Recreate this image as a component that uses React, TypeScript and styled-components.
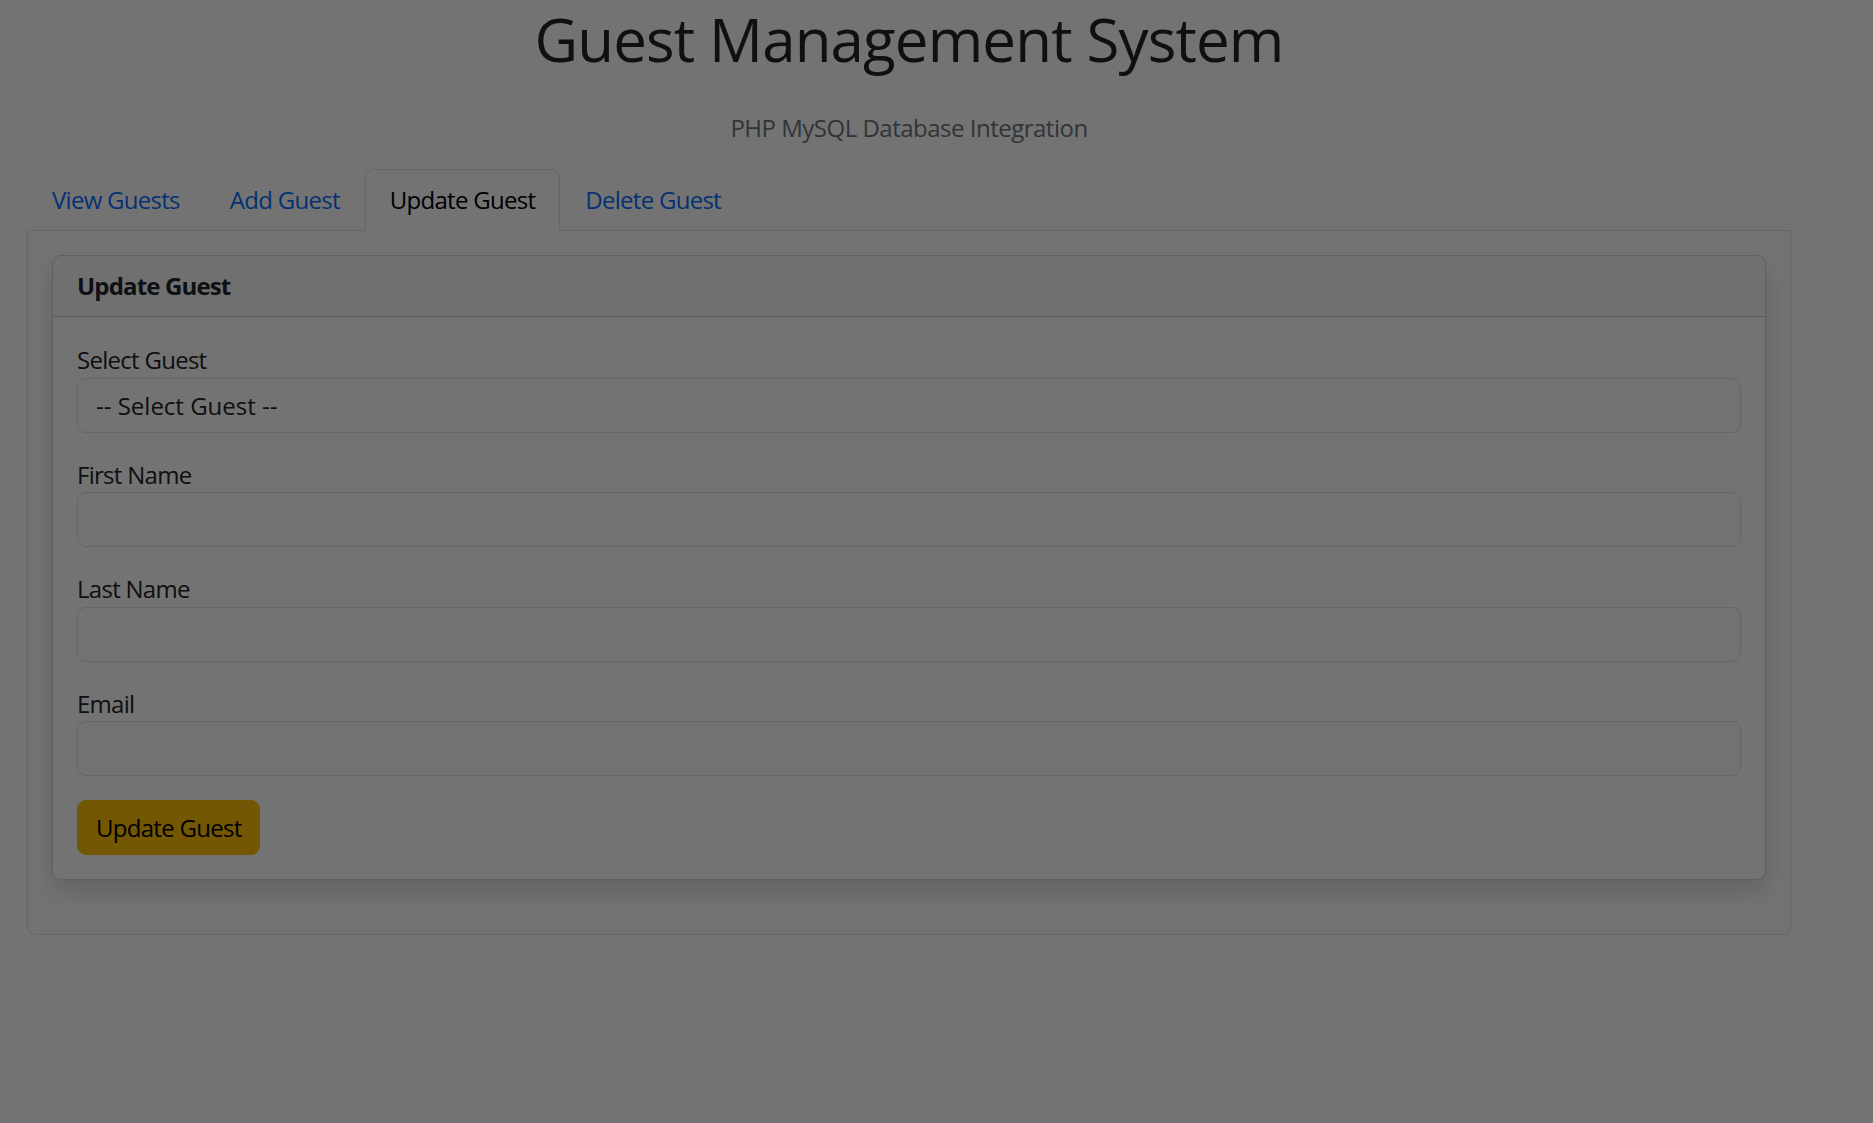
import React from "react";
import styled, { createGlobalStyle } from "styled-components";

const GlobalStyle = createGlobalStyle`
  html, body {
    margin: 0;
    padding: 0;
    background: #ffffff;
  }
  body {
    font-family: "Open Sans", "Noto Sans", "Liberation Sans", sans-serif;
    font-size: 24px;
    line-height: 1.5;
    color: #212529;
    letter-spacing: -0.03em;
    min-height: 1123px;
  }
  * { box-sizing: border-box; }
`;

const Container = styled.div`
  width: 1764px;
  margin-left: 27px;
  padding-top: 3px;
`;

const Header = styled.header`
  text-align: center;
`;

const Title = styled.h1`
  margin: 0 0 35px;
  font-size: 60px;
  line-height: 72px;
  font-weight: 500;
  letter-spacing: -0.85px;
  color: #212529;
`;

const Subtitle = styled.p`
  margin: 0 0 23px;
  font-size: 24px;
  line-height: 36px;
  letter-spacing: -0.5px;
  color: #6c757d;
`;

const Tabs = styled.ul`
  display: flex;
  list-style: none;
  margin: 0;
  padding: 0;
  border-bottom: 1px solid #dee2e6;
`;

const TabItem = styled.li`
  margin-bottom: -1px;
`;

const TabLink = styled.a<{ $active?: boolean }>`
  display: block;
  padding: 12px 24px;
  line-height: 36px;
  text-decoration: none;
  cursor: pointer;
  border: 1px solid ${(p) => (p.$active ? "#dee2e6" : "transparent")};
  border-bottom-color: ${(p) => (p.$active ? "#ffffff" : "transparent")};
  border-top-left-radius: 9px;
  border-top-right-radius: 9px;
  background: ${(p) => (p.$active ? "#ffffff" : "transparent")};
  color: ${(p) => (p.$active ? "#000000" : "#0d6efd")};
`;

const TabContent = styled.div`
  border: 1px solid #dee2e6;
  border-top: none;
  border-bottom-left-radius: 9px;
  border-bottom-right-radius: 9px;
  padding: 24px;
`;

const Card = styled.section`
  border: 1px solid rgba(0, 0, 0, 0.175);
  border-radius: 9px;
  background: #ffffff;
  box-shadow: 0 12px 24px rgba(0, 0, 0, 0.15);
  margin-bottom: 30px;
  overflow: hidden;
`;

const CardHeader = styled.div`
  padding: 12px 24px;
  line-height: 36px;
  background: rgba(33, 37, 41, 0.03);
  border-bottom: 1px solid rgba(0, 0, 0, 0.175);
`;

const CardTitle = styled.h5`
  margin: 0;
  font-size: 24px;
  line-height: 36px;
  font-weight: 700;
  letter-spacing: -0.035em;
  color: #212529;
`;

const CardBody = styled.form`
  padding: 25px 24px 24px;
  display: flex;
  flex-direction: column;
  align-items: flex-start;
`;

const Field = styled.div`
  width: 100%;
  margin-bottom: 24px;
`;

const Label = styled.label`
  display: block;
  font-size: 24px;
  line-height: 35.5px;
  color: #212529;
`;

const controlCss = `
  display: block;
  width: 100%;
  height: 55px;
  padding: 0 18px;
  font-family: inherit;
  font-size: 24px;
  color: #212529;
  background: #ffffff;
  border: 1px solid #dee2e6;
  border-radius: 9px;
  outline: none;
  appearance: none;
  -webkit-appearance: none;
`;

const Select = styled.select`
  ${controlCss}
  letter-spacing: 0;
`;

const Input = styled.input`
  ${controlCss}
  letter-spacing: inherit;
`;

const Button = styled.button`
  height: 55px;
  padding: 0 18px;
  font-family: inherit;
  font-size: 24px;
  letter-spacing: inherit;
  line-height: 36px;
  color: #000000;
  background: #ffc107;
  border: 1px solid #ffc107;
  border-radius: 9px;
  cursor: pointer;
`;

const Backdrop = styled.div`
  position: fixed;
  inset: 0;
  background: rgba(0, 0, 0, 0.55);
  z-index: 1050;
`;

const tabs = ["View Guests", "Add Guest", "Update Guest", "Delete Guest"];

export default function App() {
  return (
    <>
      <GlobalStyle />
      <Container>
        <Header>
          <Title>Guest Management System</Title>
          <Subtitle>PHP MySQL Database Integration</Subtitle>
        </Header>
        <Tabs>
          {tabs.map((t) => (
            <TabItem key={t}>
              <TabLink $active={t === "Update Guest"}>{t}</TabLink>
            </TabItem>
          ))}
        </Tabs>
        <TabContent>
          <Card>
            <CardHeader>
              <CardTitle>Update Guest</CardTitle>
            </CardHeader>
            <CardBody onSubmit={(e) => e.preventDefault()}>
              <Field>
                <Label htmlFor="guest">Select Guest</Label>
                <Select id="guest" defaultValue="">
                  <option value="">-- Select Guest --</option>
                </Select>
              </Field>
              <Field>
                <Label htmlFor="first">First Name</Label>
                <Input id="first" type="text" />
              </Field>
              <Field>
                <Label htmlFor="last">Last Name</Label>
                <Input id="last" type="text" />
              </Field>
              <Field>
                <Label htmlFor="email">Email</Label>
                <Input id="email" type="email" />
              </Field>
              <Button type="submit">Update Guest</Button>
            </CardBody>
          </Card>
        </TabContent>
      </Container>
      <Backdrop />
    </>
  );
}
